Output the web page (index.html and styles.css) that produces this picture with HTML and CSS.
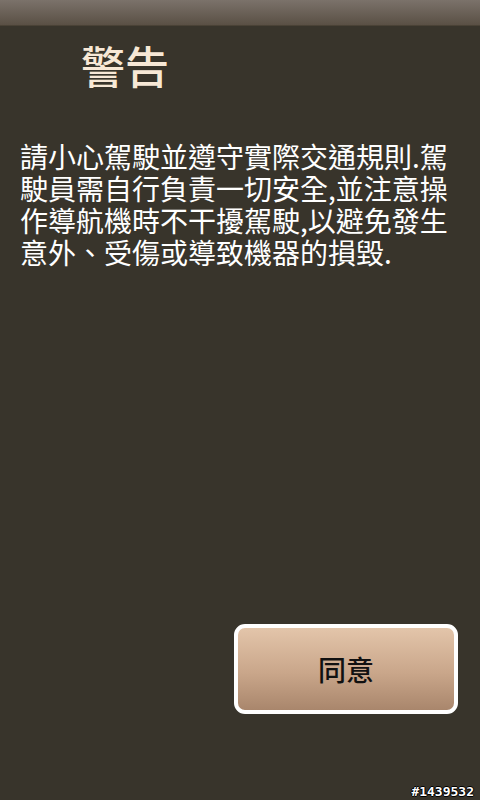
FILE: index.html
```html
<!DOCTYPE html>
<html lang="zh-Hant">
<head>
    <meta charset="UTF-8">
    <meta name="viewport" content="width=device-width, initial-scale=1.0">
    <title>警告</title>
    <link rel="stylesheet" href="styles.css">
</head>
<body>

    <div class="screen">
        <div class="status-bar"></div>

        <h1 class="title">警告</h1>

        <p class="message">請小心駕駛並遵守實際交通規則.駕駛員需自行負責一切安全,並注意操作導航機時不干擾駕駛,以避免發生意外、受傷或導致機器的損毀.</p>

        <div class="actions">
            <button class="agree-button">同意</button>
        </div>

        <span class="watermark">#1439532</span>
    </div>

</body>
</html>
```

FILE: styles.css
```css
body {
    margin: 0;
    background-color: #38342b;
    font-family: "Noto Sans CJK TC", "Noto Sans", sans-serif;
}
.screen {
    position: relative;
    display: flex;
    flex-direction: column;
    height: 800px;
    overflow: hidden;
}
.status-bar {
    height: 25px;
    background: linear-gradient(#7b726a, #5a5045);
    border-bottom: 1px solid #4a4236;
}
.title {
    margin: 13px 0 0 0;
    padding-left: 81px;
    font-size: 44px;
    line-height: 52px;
    font-weight: 500;
    color: #f7e8d6;
}
.message {
    margin: 49px 0 0 0;
    padding: 0 22px 0 20px;
    font-size: 28px;
    line-height: 32px;
    font-weight: normal;
    color: #ffffff;
}
.actions {
    display: flex;
    justify-content: flex-end;
    margin-top: auto;
    margin-bottom: 86px;
    padding-right: 22px;
}
.agree-button {
    width: 224px;
    height: 90px;
    border: 4px solid #ffffff;
    border-radius: 11px;
    background: linear-gradient(#e3c5aa, #c9a68a 55%, #a9866c);
    color: #111111;
    font-family: inherit;
    font-size: 28px;
    font-weight: 500;
    cursor: pointer;
}
.watermark {
    position: absolute;
    right: 6px;
    bottom: 1px;
    font-family: "DejaVu Sans Mono", monospace;
    font-size: 13px;
    font-weight: bold;
    color: #ffffff;
    text-shadow: 1px 0 0 #000, -1px 0 0 #000, 0 1px 0 #000, 0 -1px 0 #000;
}
```
